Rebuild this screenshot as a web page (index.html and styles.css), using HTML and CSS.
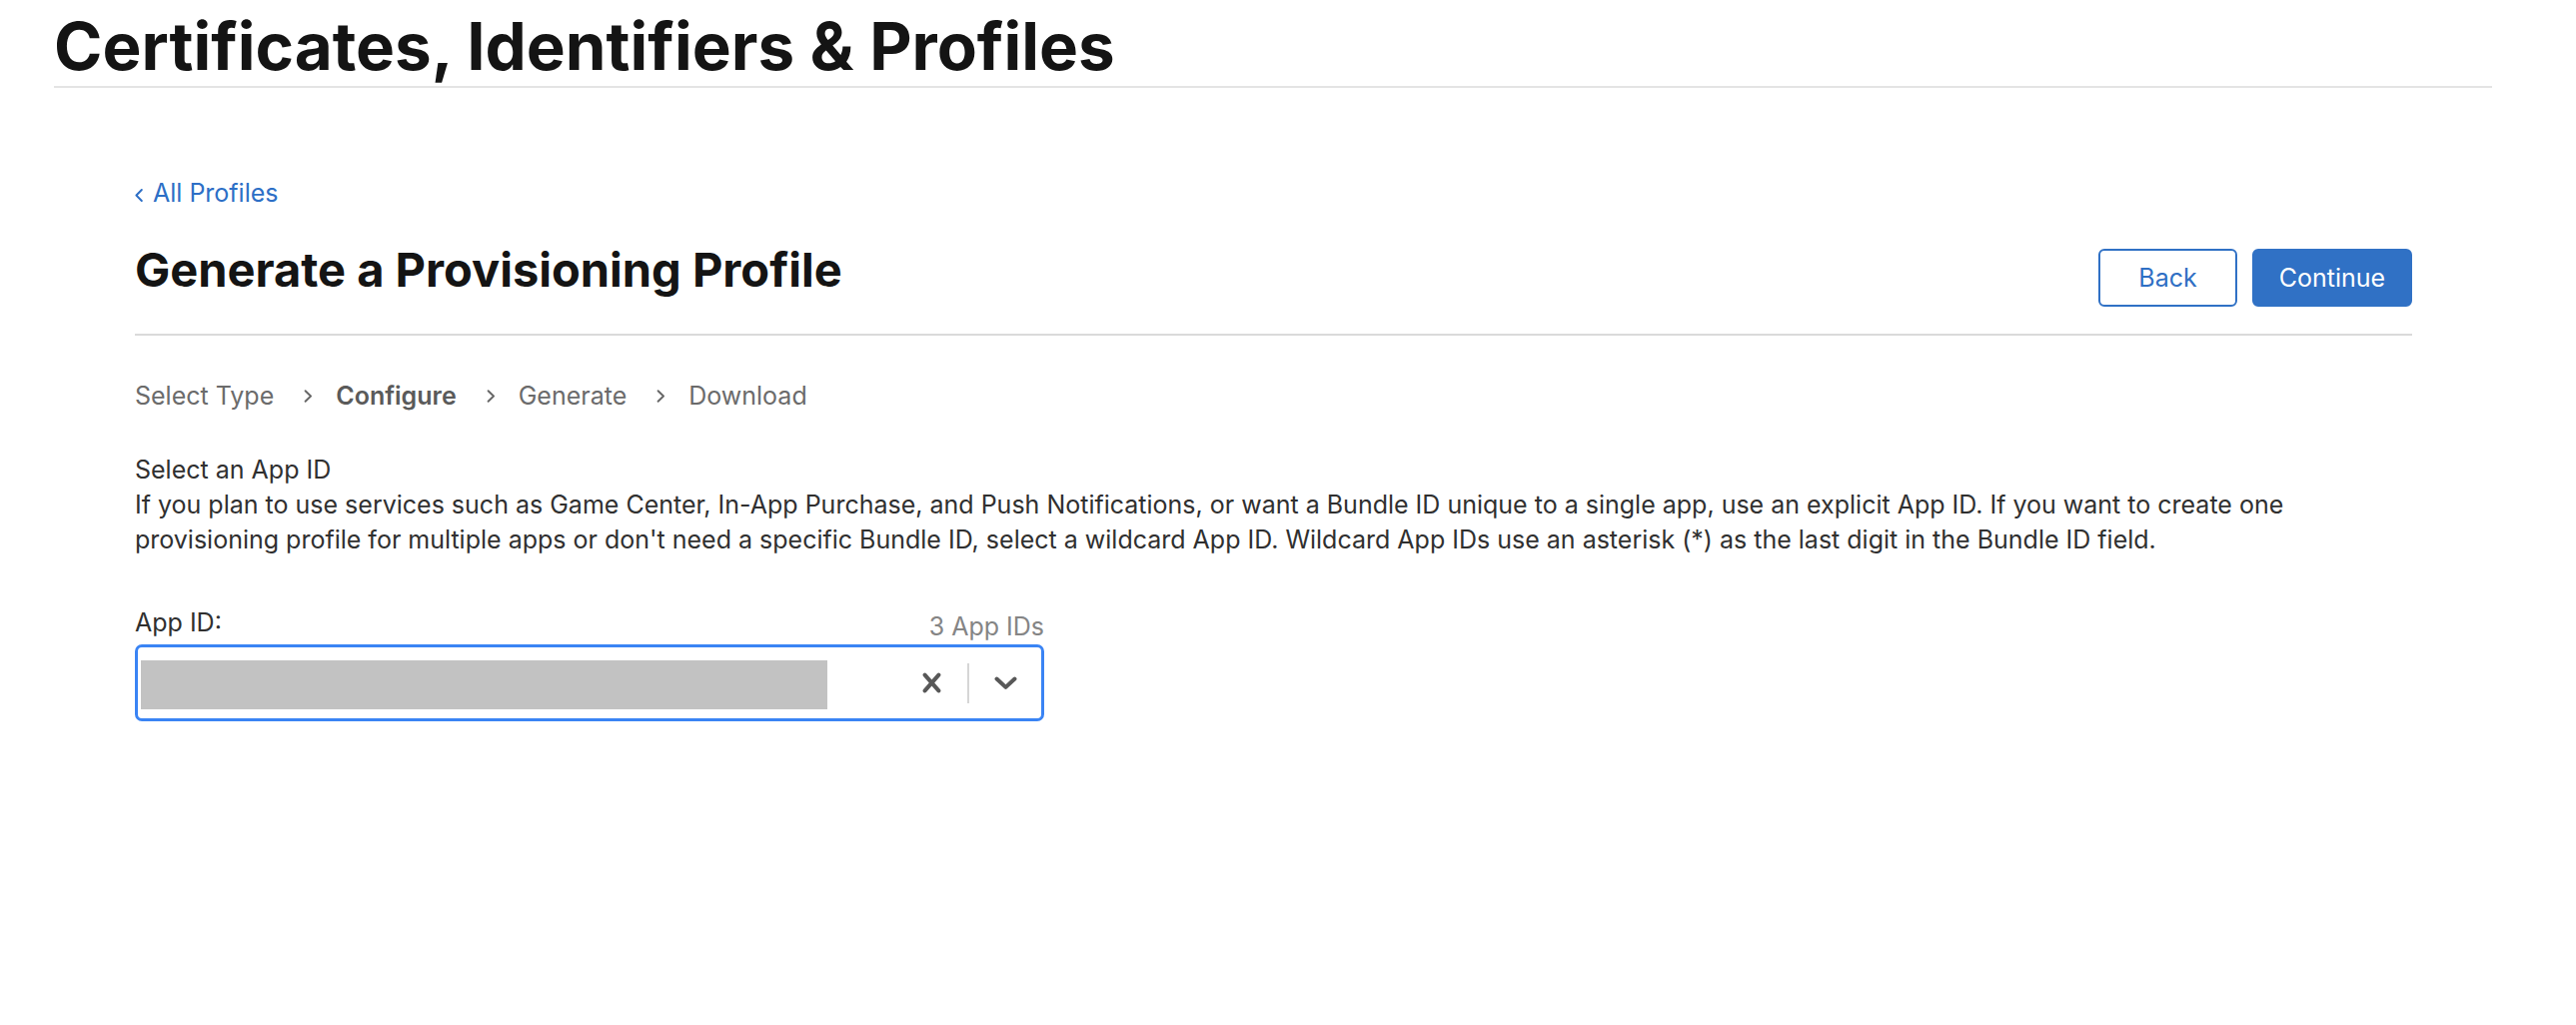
FILE: index.html
```html
<!DOCTYPE html>
<html lang="en">
<head>
<meta charset="utf-8">
<title>Certificates, Identifiers &amp; Profiles</title>
<link rel="stylesheet" href="styles.css">
</head>
<body>
<div class="page">
  <header class="page-head">
    <h1 class="site-title">Certificates, Identifiers &amp; Profiles</h1>
  </header>
  <main class="content">
    <a class="back-link" href="#"><svg class="back-chev" width="8" height="13" viewBox="0 0 8 13" aria-hidden="true"><path d="M6.8 1 L1.4 6.5 L6.8 12" fill="none" stroke="currentColor" stroke-width="1.9" stroke-linecap="round" stroke-linejoin="round"/></svg>All Profiles</a>

    <div class="title-row">
      <h2 class="page-title">Generate a Provisioning Profile</h2>
      <div class="actions">
        <button class="btn btn-outline" type="button">Back</button>
        <button class="btn btn-primary" type="button">Continue</button>
      </div>
    </div>

    <ol class="steps">
      <li class="step">Select Type</li>
      <li class="step-sep" aria-hidden="true"><svg width="9" height="13" viewBox="0 0 9 13"><path d="M1.6 1.2 L7 6.5 L1.6 11.8" fill="none" stroke="currentColor" stroke-width="1.9" stroke-linecap="round" stroke-linejoin="round"/></svg></li>
      <li class="step step-current">Configure</li>
      <li class="step-sep" aria-hidden="true"><svg width="9" height="13" viewBox="0 0 9 13"><path d="M1.6 1.2 L7 6.5 L1.6 11.8" fill="none" stroke="currentColor" stroke-width="1.9" stroke-linecap="round" stroke-linejoin="round"/></svg></li>
      <li class="step">Generate</li>
      <li class="step-sep" aria-hidden="true"><svg width="9" height="13" viewBox="0 0 9 13"><path d="M1.6 1.2 L7 6.5 L1.6 11.8" fill="none" stroke="currentColor" stroke-width="1.9" stroke-linecap="round" stroke-linejoin="round"/></svg></li>
      <li class="step">Download</li>
    </ol>

    <section class="intro">
      <div class="intro-title">Select an App ID</div>
      <p class="intro-text">If you plan to use services such as Game Center, In-App Purchase, and Push Notifications, or want a Bundle ID unique to a single app, use an explicit App ID. If you want to create one provisioning profile for multiple apps or don't need a specific Bundle ID, select a wildcard App ID. Wildcard App IDs use an asterisk (*) as the last digit in the Bundle ID field.</p>
    </section>

    <div class="field">
      <div class="field-head">
        <label class="field-label">App ID:</label>
        <span class="field-count">3 App IDs</span>
      </div>
      <div class="select">
        <div class="select-value"><div class="redacted"></div></div>
        <div class="indicator">
          <svg width="19" height="21" viewBox="0 0 19 21" aria-hidden="true"><path d="M2.6 2.6 L16.4 18.4 M16.4 2.6 L2.6 18.4" fill="none" stroke="currentColor" stroke-width="4" stroke-linecap="round"/></svg>
        </div>
        <div class="indicator-sep"></div>
        <div class="indicator">
          <svg width="23" height="14" viewBox="0 0 23 14" aria-hidden="true"><path d="M2.5 2.5 L11.5 10.9 L20.5 2.5" fill="none" stroke="currentColor" stroke-width="4" stroke-linecap="round" stroke-linejoin="round"/></svg>
        </div>
      </div>
    </div>
  </main>
</div>
</body>
</html>
```
FILE: styles.css
```css
* { box-sizing: border-box; }

html, body {
  margin: 0;
  padding: 0;
  background: #ffffff;
}

body {
  font-family: "Inter", "Liberation Sans", sans-serif;
  font-size: 25px;
  color: #333333;
}

.page {
  margin-left: 54px;
  width: 2440px;
}

.site-title {
  margin: 0;
  padding-top: 8px;
  font-size: 65.5px;
  line-height: 78px;
  font-weight: 700;
  color: #141414;
  border-bottom: 2px solid #e4e4e4;
}

.content {
  padding: 90px 80px 0 81px;
}

.back-link {
  display: inline-block;
  font-size: 25px;
  line-height: 30px;
  color: #2d6fc6;
  text-decoration: none;
}

.back-chev {
  margin-right: 10px;
  vertical-align: baseline;
}

.title-row {
  margin-top: 34px;
  display: flex;
  justify-content: space-between;
  align-items: flex-start;
  padding-bottom: 27px;
  border-bottom: 2px solid #dadada;
}

.page-title {
  margin: 0;
  font-size: 47px;
  line-height: 56px;
  font-weight: 700;
  color: #141414;
}

.actions {
  margin-top: 7px;
  display: flex;
  gap: 15px;
}

.btn {
  height: 58px;
  border-radius: 6px;
  border: 2px solid #3071c5;
  font-family: "Inter", "Liberation Sans", sans-serif;
  font-size: 25px;
  line-height: 30px;
  padding: 0;
  display: flex;
  align-items: center;
  justify-content: center;
  cursor: pointer;
}

.btn-outline {
  width: 139px;
  background: #ffffff;
  color: #2f6fc4;
}

.btn-primary {
  width: 160px;
  background: #3071c5;
  color: #ffffff;
}

.steps {
  margin: 45px 0 0 0;
  padding: 0;
  list-style: none;
  display: flex;
  align-items: center;
  line-height: 30px;
  font-size: 25px;
  color: #6b6b6b;
}

.step-current {
  font-weight: 600;
  color: #5a5a5a;
}

.step-sep {
  display: flex;
  align-items: center;
  margin: 0 23px 0 30px;
  color: #666666;
}

.intro {
  margin-top: 42px;
  line-height: 35px;
  font-size: 25px;
  color: #303030;
}

.intro-text {
  margin: 0;
}

.field {
  margin-top: 50px;
  width: 910px;
}

.field-head {
  display: flex;
  justify-content: space-between;
  align-items: flex-end;
}

.field-label {
  font-size: 25px;
  line-height: 30px;
  color: #303030;
}

.field-count {
  font-size: 25px;
  line-height: 22px;
  color: #858585;
}

.select {
  margin-top: 7px;
  height: 77px;
  display: flex;
  align-items: center;
  border: 3px solid #3a84f4;
  border-radius: 7px;
  background: #ffffff;
}

.select-value {
  flex: 1;
  padding-left: 3px;
}

.redacted {
  width: 687px;
  height: 49px;
  margin-top: 4px;
  background: #c2c2c2;
}

.indicator {
  width: 72px;
  display: flex;
  align-items: center;
  justify-content: center;
  color: #585858;
}

.indicator-sep {
  width: 2px;
  height: 40px;
  background: #d6d6d6;
}
```
